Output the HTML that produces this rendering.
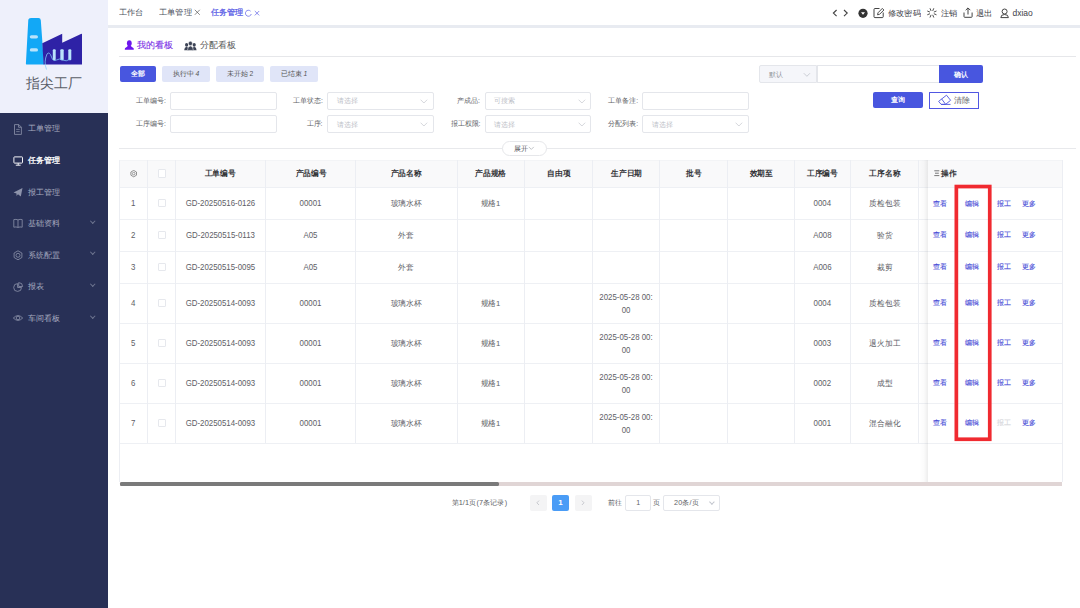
<!DOCTYPE html><html><head><meta charset="utf-8"><style>
*{box-sizing:border-box;margin:0;padding:0}
html,body{width:1080px;height:608px;overflow:hidden;background:#fff;font-family:"Liberation Sans",sans-serif;color:#606266}
.a{position:absolute;white-space:nowrap}
#side{position:absolute;left:0;top:0;width:107.6px;height:608px;background:#283056}
#logo{position:absolute;left:0;top:0;width:107.6px;height:112.5px;background:#eef0fb}
.mi{position:absolute;left:27.6px;font-size:7.6px;color:#a9adc0;line-height:10px;white-space:nowrap}
.mi.on{color:#fff;-webkit-text-stroke:0.3px #fff}
.chev{position:absolute;left:90.5px;width:3.5px;height:3.5px;border-right:0.8px solid #6f7590;border-bottom:0.8px solid #6f7590;transform:rotate(45deg)}
.btn{position:absolute;border-radius:2px;font-size:6.75px;text-align:center;white-space:nowrap}
.lbl{position:absolute;font-size:6.75px;color:#606266;line-height:10px;white-space:nowrap}
.inp{position:absolute;border:0.8px solid #e4e6eb;border-radius:2px;background:#fff}
.ph{position:absolute;font-size:6.75px;color:#bcc0c7;line-height:10px;white-space:nowrap}
.sc{position:absolute;width:3.8px;height:3.8px;border-right:0.6px solid #c0c4cc;border-bottom:0.6px solid #c0c4cc;transform:rotate(45deg)}
.hl{position:absolute;height:1px;background:#eef0f4}
.vl{position:absolute;width:1px;background:#eceef3}
.th{position:absolute;font-size:8px;font-weight:bold;color:#333438;line-height:10px;text-align:center;white-space:nowrap;transform:scaleX(0.96)}
.td{position:absolute;font-size:7.875px;color:#5e6066;line-height:12.6px;text-align:center}
.op{position:absolute;font-size:6.8px;color:#4a4ed6;line-height:10px;white-space:nowrap;-webkit-text-stroke:0.12px currentColor}
.cb{position:absolute;width:7.6px;height:8.2px;border:0.8px solid #e6e8ed;border-radius:1px;background:#fff}
</style></head><body>
<div id="side">
  <div id="logo">
    <svg width="107.5" height="112" style="position:absolute;left:0;top:0">
      <path d="M28.3 19.8 Q28.6 18 31 18 L38.5 18 Q40.6 18 40.8 20.2 L44 64.5 L26.5 64.5 Q25.8 64.5 25.9 63.5 Z" fill="#12a8f6"/>
      <path d="M42.3 43.3 L62.2 33.7 L62.2 42.7 L81.5 33.7 Q82 33.6 82 34.5 L82 64.5 L43.6 64.5 Z" fill="#2e22a6"/>
      <rect x="29.8" y="35.2" width="8.2" height="3.2" rx="1.6" fill="#b9e3fb"/>
      <rect x="29.8" y="48.3" width="8.2" height="3.2" rx="1.6" fill="#b9e3fb"/>
      <rect x="52.8" y="49.3" width="2.9" height="11" rx="1" fill="#b9e3fb"/>
      <rect x="60.3" y="49.3" width="3.4" height="11" rx="1" fill="#b9e3fb"/>
      <rect x="68.3" y="49.3" width="3" height="11" rx="1" fill="#b9e3fb"/>
      <path d="M46.5 69.5 Q43.5 62 47 54 Q49.5 51 51.5 57 Q53 62 56.5 60 Q59.5 58 62.5 60 Q66 62 70.5 59" stroke="#86cdf8" stroke-width="0.75" fill="none"/>
    </svg>
    <div class="a" style="left:25.5px;top:74.8px;font-size:14px;line-height:16px;color:#5a5e68">指尖工厂</div>
  </div>

<div class="mi" style="top:124.4px">工单管理</div>
<svg class="a" style="left:13px;top:123.8px" width="11" height="11"><path d="M1.5 0.6h4.3l2.6 2.6v7.2h-6.9z M5.6 0.6v2.7h2.8" fill="none" stroke="#8d93ab" stroke-width="0.8" stroke-linejoin="round"/><path d="M3.2 5.4h3.5 M3.2 7.6h3.5" stroke="#8d93ab" stroke-width="0.7"/></svg>
<div class="mi on" style="top:156.1px">任务管理</div>
<svg class="a" style="left:13px;top:155.5px" width="11" height="11"><rect x="0.9" y="0.9" width="8.6" height="6.2" rx="0.6" fill="none" stroke="#f4f4f8" stroke-width="1"/><path d="M2.8 9.2h4.8 M5.2 7.1v2" stroke="#f4f4f8" stroke-width="1"/></svg>
<div class="mi" style="top:187.7px">报工管理</div>
<svg class="a" style="left:13px;top:187.1px" width="11" height="11"><path d="M0.5 5.5 L9.5 1 L7.8 9.5 L5 7.3 L3.5 9 L3.5 6.5 Z" fill="#8d93ab"/></svg>
<div class="mi" style="top:218.9px">基础资料</div>
<svg class="a" style="left:13px;top:218.3px" width="11" height="11"><path d="M0.8 1.6 Q3 1 5 1.9 Q7 1 9.2 1.6 V9.2 Q7 8.6 5 9.4 Q3 8.6 0.8 9.2 Z M5 1.9 V9.4" fill="none" stroke="#8d93ab" stroke-width="0.8"/></svg>
<div class="chev" style="top:218.6px"></div>
<div class="mi" style="top:250.6px">系统配置</div>
<svg class="a" style="left:13px;top:250.0px" width="11" height="11"><circle cx="5" cy="5.3" r="2" fill="none" stroke="#8d93ab" stroke-width="0.8"/><path d="M5 0.8 L8.9 3 L8.9 7.5 L5 9.8 L1.1 7.5 L1.1 3 Z" fill="none" stroke="#8d93ab" stroke-width="0.8"/></svg>
<div class="chev" style="top:250.3px"></div>
<div class="mi" style="top:282.2px">报表</div>
<svg class="a" style="left:13px;top:281.6px" width="11" height="11"><path d="M4.6 1.6 A3.9 3.9 0 1 0 8.5 5.5 H4.6 Z M5.7 0.6 A3.9 3.9 0 0 1 9.6 4.5 H5.7 Z" fill="none" stroke="#8d93ab" stroke-width="0.8" stroke-linejoin="round"/></svg>
<div class="chev" style="top:281.9px"></div>
<div class="mi" style="top:313.9px">车间看板</div>
<svg class="a" style="left:13px;top:313.3px" width="11" height="11"><path d="M0.3 5 Q5 0.2 9.7 5 Q5 9.8 0.3 5z" fill="none" stroke="#8d93ab" stroke-width="0.8"/><circle cx="5" cy="5" r="1.8" fill="none" stroke="#8d93ab" stroke-width="0.8"/></svg>
<div class="chev" style="top:313.6px"></div>
</div>
<div class="a" style="left:107.5px;top:25px;width:972.5px;height:3px;background:#e8ebf1"></div>
<div class="a" style="left:119px;top:8px;font-size:7.875px;line-height:10px;color:#4a4f5c;transform:scaleX(1.03);transform-origin:0 0">工作台</div>
<div class="a" style="left:159.3px;top:8px;font-size:7.875px;line-height:10px;color:#4a4f5c;transform:scaleX(1.03);transform-origin:0 0">工单管理</div>
<svg class="a" style="left:194px;top:9px" width="7" height="7"><path d="M0.8 0.8 L5.8 5.8 M5.8 0.8 L0.8 5.8" stroke="#555" stroke-width="0.7"/></svg>
<div class="a" style="left:210.8px;top:8px;transform:scaleX(1.02);transform-origin:0 0;font-size:7.875px;line-height:10px;color:#5a5de6;-webkit-text-stroke:0.25px #5a5de6">任务管理</div>
<svg class="a" style="left:245px;top:9px" width="16" height="8"><path d="M5.6 2.2 A3 3 0 1 0 6.3 5" fill="none" stroke="#5a5de6" stroke-width="0.7"/><path d="M9.8 2 L14.2 6.4 M14.2 2 L9.8 6.4" stroke="#5a5de6" stroke-width="0.7"/></svg>
<svg class="a" style="left:830px;top:8px" width="212" height="12"><path d="M6.6 2 L3.4 5.1 L6.6 8.2 M14 2 L17.2 5.1 L14 8.2" fill="none" stroke="#444" stroke-width="1.15"/><circle cx="33" cy="5.3" r="4.6" fill="#333"/><path d="M31 4.3h4l-2 2.4z" fill="#fff"/></svg>
<svg class="a" style="left:873px;top:7px" width="12" height="12"><path d="M6.5 1.5 H2 Q1 1.5 1 2.5 V9.8 Q1 10.6 2 10.6 H9.3 Q10.2 10.6 10.2 9.8 V5.5" fill="none" stroke="#444" stroke-width="1"/><path d="M4.5 7.8 L5 5.8 L9.3 1.4 L10.9 3 L6.6 7.3 Z" fill="none" stroke="#444" stroke-width="0.95"/></svg>
<div class="a" style="left:887.5px;top:8.5px;font-size:7.875px;line-height:10px;color:#3e4148;transform:scaleX(1.03);transform-origin:0 0">修改密码</div>
<svg class="a" style="left:927px;top:8px" width="11" height="11"><path d="M7.21 5.86L9.15 6.66M5.86 7.21L6.66 9.15M3.94 7.21L3.14 9.15M2.59 5.86L0.65 6.66M2.59 3.94L0.65 3.14M3.94 2.59L3.14 0.65M5.86 2.59L6.66 0.65M7.21 3.94L9.15 3.14" stroke="#444" stroke-width="0.95" stroke-linecap="round"/></svg>
<div class="a" style="left:940.5px;top:8.5px;font-size:7.875px;line-height:10px;color:#3e4148;transform:scaleX(1.03);transform-origin:0 0">注销</div>
<svg class="a" style="left:963px;top:6.8px" width="11" height="11"><path d="M1 5.5 V9.6 Q1 10.3 1.7 10.3 H8.4 Q9.1 10.3 9.1 9.6 V5.5" fill="none" stroke="#444" stroke-width="1"/><path d="M5 7.5 V1 M2.7 3.2 L5 0.9 L7.3 3.2" fill="none" stroke="#444" stroke-width="1"/></svg>
<div class="a" style="left:976px;top:8.5px;font-size:7.875px;line-height:10px;color:#3e4148;transform:scaleX(1.03);transform-origin:0 0">退出</div>
<svg class="a" style="left:999.5px;top:7.8px" width="10" height="11"><circle cx="4.6" cy="3.5" r="2.5" fill="none" stroke="#444" stroke-width="1"/><path d="M0.8 9.6 Q0.8 6.5 4.6 6.5 Q8.4 6.5 8.4 9.6 Z" fill="none" stroke="#444" stroke-width="1"/></svg>
<div class="a" style="left:1012.5px;top:7.8px;font-size:8.5px;line-height:10px;color:#3e4148">dxiao</div>
<svg class="a" style="left:124px;top:40px" width="11" height="11"><ellipse cx="5.3" cy="3.2" rx="2.4" ry="2.9" fill="#6d16ee"/><path d="M3.9 5.6 Q3.6 7 1.2 8 Q0.8 8.3 0.8 9.7 H9.8 Q9.8 8.3 9.4 8 Q7 7 6.7 5.6 Z" fill="#6d16ee"/></svg>
<div class="a" style="left:136.5px;top:39.5px;font-size:9px;line-height:11px;color:#7a2de6;-webkit-text-stroke:0.1px #7a2de6">我的看板</div>
<svg class="a" style="left:183.5px;top:40.5px" width="14" height="10"><g fill="#3d4456"><ellipse cx="2.6" cy="3.8" rx="1.6" ry="1.9"/><path d="M0.2 9.2 Q0.3 6.2 2.6 5.8 Q4.6 6.2 4.8 9.2 Z"/><ellipse cx="10.2" cy="3.8" rx="1.6" ry="1.9"/><path d="M12.6 9.2 Q12.5 6.2 10.2 5.8 Q8.2 6.2 8 9.2 Z"/></g><g fill="#3d4456" stroke="#fff" stroke-width="0.5"><ellipse cx="6.4" cy="2.5" rx="2" ry="2.3"/><path d="M3.4 9.4 Q3.6 5.3 6.4 5 Q9.2 5.3 9.4 9.4 Z"/></g></svg>
<div class="a" style="left:199.6px;top:39.5px;font-size:9px;line-height:11px;color:#555">分配看板</div>
<div class="a" style="left:119px;top:56px;width:957px;height:1px;background:#e6e7ea"></div>
<div class="btn" style="left:119.7px;top:66.3px;width:36.3px;height:16.2px;background:#4856df;color:#fff;line-height:16.2px;font-weight:bold">全部</div>
<div class="btn" style="left:161.9px;top:66.3px;width:47.9px;height:16.2px;background:#e0e5f8;color:#555;line-height:16.2px">执行中 <i>4</i></div>
<div class="btn" style="left:216.1px;top:66.3px;width:47.8px;height:16.2px;background:#e0e5f8;color:#555;line-height:16.2px">未开始 2</div>
<div class="btn" style="left:270px;top:66.3px;width:48px;height:16.2px;background:#e0e5f8;color:#555;line-height:16.2px">已结束 <i>1</i></div>
<div class="inp" style="left:759.3px;top:65.4px;width:58px;height:17.8px;background:#f5f6fa;border-radius:2px 0 0 2px"></div>
<div class="ph" style="left:769px;top:69.5px;color:#909399">默认</div>
<svg class="a" style="left:802.5px;top:72px" width="8" height="6"><path d="M0.8 1.2 L3.9 4.3 L7 1.2" fill="none" stroke="#b8bcc4" stroke-width="0.7"/></svg>
<div class="inp" style="left:816.5px;top:65.4px;width:123px;height:17.8px;border-radius:0"></div>
<div class="btn" style="left:939px;top:65.4px;width:44.4px;height:18px;background:#4856df;color:#fff;line-height:18px;border-radius:0 2px 2px 0;font-weight:bold" ><span style="position:relative;top:0.6px">确认</span></div>
<div class="lbl" style="left:136px;top:95.6px;width:28.5px;text-align:right">工单编号:</div>
<div class="inp" style="left:170px;top:91.7px;width:106.5px;height:18px"></div>
<div class="lbl" style="left:292.9px;top:95.6px;width:28.9px;text-align:right">工单状态:</div>
<div class="inp" style="left:327.3px;top:91.7px;width:106.5px;height:18px"></div>
<div class="ph" style="left:336.9px;top:95.8px">请选择</div>
<svg class="a" style="left:420.3px;top:98.5px" width="8" height="5"><path d="M0.6 0.7 L3.9 4 L7.2 0.7" fill="none" stroke="#c3c6cd" stroke-width="0.7"/></svg>
<div class="lbl" style="left:456.9px;top:95.6px;width:22.4px;text-align:right">产成品:</div>
<div class="inp" style="left:484.8px;top:91.7px;width:106.5px;height:18px"></div>
<div class="ph" style="left:494.4px;top:95.8px">可搜索</div>
<svg class="a" style="left:577.8px;top:98.5px" width="8" height="5"><path d="M0.6 0.7 L3.9 4 L7.2 0.7" fill="none" stroke="#c3c6cd" stroke-width="0.7"/></svg>
<div class="lbl" style="left:608.3px;top:95.6px;width:28.5px;text-align:right">工单备注:</div>
<div class="inp" style="left:642.3px;top:91.7px;width:106.5px;height:18px"></div>
<div class="lbl" style="left:136px;top:119.3px;width:28.5px;text-align:right">工序编号:</div>
<div class="inp" style="left:170px;top:115.4px;width:106.5px;height:18px"></div>
<div class="lbl" style="left:306.6px;top:119.3px;width:15.2px;text-align:right">工序:</div>
<div class="inp" style="left:327.3px;top:115.4px;width:106.5px;height:18px"></div>
<div class="ph" style="left:336.9px;top:119.5px">请选择</div>
<svg class="a" style="left:420.3px;top:122.2px" width="8" height="5"><path d="M0.6 0.7 L3.9 4 L7.2 0.7" fill="none" stroke="#c3c6cd" stroke-width="0.7"/></svg>
<div class="lbl" style="left:450.5px;top:119.3px;width:28.8px;text-align:right">报工权限:</div>
<div class="inp" style="left:484.8px;top:115.4px;width:106.5px;height:18px"></div>
<div class="ph" style="left:494.4px;top:119.5px">请选择</div>
<svg class="a" style="left:577.8px;top:122.2px" width="8" height="5"><path d="M0.6 0.7 L3.9 4 L7.2 0.7" fill="none" stroke="#c3c6cd" stroke-width="0.7"/></svg>
<div class="lbl" style="left:608.3px;top:119.3px;width:28.5px;text-align:right">分配列表:</div>
<div class="inp" style="left:642.3px;top:115.4px;width:106.5px;height:18px"></div>
<div class="ph" style="left:651.9px;top:119.5px">请选择</div>
<svg class="a" style="left:735.3px;top:122.2px" width="8" height="5"><path d="M0.6 0.7 L3.9 4 L7.2 0.7" fill="none" stroke="#c3c6cd" stroke-width="0.7"/></svg>
<div class="btn" style="left:872.5px;top:91.9px;width:50.4px;height:16.4px;background:#4856df;color:#fff;line-height:16.4px;font-weight:bold">查询</div>
<div class="btn" style="left:928.7px;top:92px;width:50.3px;height:16.7px;border:1.1px solid #5157e2;border-bottom-width:1.4px;border-radius:0.5px;background:#fff"></div>
<svg class="a" style="left:936px;top:93px" width="16" height="13"><path d="M2.6 8.4 L10.5 2.2 L14.6 7.3 L9.6 11.4 L5.2 11.4 Z M5.6 5.9 L9.4 11" fill="none" stroke="#4d55e0" stroke-width="0.9" stroke-linejoin="round"/><path d="M5 11.4 H14.5" stroke="#4d55e0" stroke-width="0.9"/></svg>
<div class="a" style="left:954px;top:95.5px;font-size:7.875px;line-height:10px;color:#606266">清除</div>
<div class="a" style="left:119px;top:148px;width:957px;height:1px;background:#e8e9ec"></div>
<div class="a" style="left:501.7px;top:141.2px;width:45px;height:14.5px;border:0.9px solid #e6e7ea;border-radius:7.5px;background:#fff"></div>
<div class="a" style="left:513.6px;top:143.5px;font-size:7px;line-height:10px;color:#505258">展开</div>
<svg class="a" style="left:528px;top:146px" width="7" height="5"><path d="M0.8 0.9 L3.3 3.4 L5.8 0.9" fill="none" stroke="#a8abb2" stroke-width="0.7"/></svg>
<div class="a" style="left:119.3px;top:160px;width:943px;height:27.599999999999994px;background:#f9f9fa"></div>
<div class="hl" style="left:119.3px;top:160px;width:943px;background:#f3f4f6"></div>
<div class="hl" style="left:119.3px;top:187.1px;width:943px"></div>
<div class="hl" style="left:119.3px;top:218.9px;width:943px"></div>
<div class="hl" style="left:119.3px;top:250.7px;width:943px"></div>
<div class="hl" style="left:119.3px;top:282.8px;width:943px"></div>
<div class="hl" style="left:119.3px;top:322.8px;width:943px"></div>
<div class="hl" style="left:119.3px;top:362.8px;width:943px"></div>
<div class="hl" style="left:119.3px;top:402.8px;width:943px"></div>
<div class="hl" style="left:119.3px;top:442.9px;width:943px"></div>
<div class="vl" style="left:118.8px;top:160px;height:283.4px"></div>
<div class="vl" style="left:146.7px;top:160px;height:283.4px"></div>
<div class="vl" style="left:174.9px;top:160px;height:283.4px"></div>
<div class="vl" style="left:265.0px;top:160px;height:283.4px"></div>
<div class="vl" style="left:354.9px;top:160px;height:283.4px"></div>
<div class="vl" style="left:456.9px;top:160px;height:283.4px"></div>
<div class="vl" style="left:524.0px;top:160px;height:283.4px"></div>
<div class="vl" style="left:592.0px;top:160px;height:283.4px"></div>
<div class="vl" style="left:659.0px;top:160px;height:283.4px"></div>
<div class="vl" style="left:727.1px;top:160px;height:283.4px"></div>
<div class="vl" style="left:793.5px;top:160px;height:283.4px"></div>
<div class="vl" style="left:850.2px;top:160px;height:283.4px"></div>
<div class="vl" style="left:917.9px;top:160px;height:283.4px"></div>
<div class="vl" style="left:1061.9px;top:160px;height:283.4px"></div>
<div class="vl" style="left:118.8px;top:443px;height:38.5px"></div>
<div class="vl" style="left:1061.9px;top:443px;height:38.5px"></div>
<div class="th" style="left:175.4px;width:90.1px;top:168.5px">工单编号</div>
<div class="th" style="left:265.5px;width:89.9px;top:168.5px">产品编号</div>
<div class="th" style="left:355.4px;width:102.0px;top:168.5px">产品名称</div>
<div class="th" style="left:457.4px;width:67.1px;top:168.5px">产品规格</div>
<div class="th" style="left:524.5px;width:68.0px;top:168.5px">自由项</div>
<div class="th" style="left:592.5px;width:67.0px;top:168.5px">生产日期</div>
<div class="th" style="left:659.5px;width:68.1px;top:168.5px">批号</div>
<div class="th" style="left:727.6px;width:66.4px;top:168.5px">效期至</div>
<div class="th" style="left:794px;width:56.7px;top:168.5px">工序编号</div>
<div class="th" style="left:850.7px;width:67.7px;top:168.5px">工序名称</div>
<svg class="a" style="left:130px;top:169.8px" width="8" height="8"><circle cx="3.7" cy="3.6" r="1.3" fill="none" stroke="#777" stroke-width="0.7"/><path d="M3.7 0.4 L6.5 2 L6.5 5.2 L3.7 6.8 L0.9 5.2 L0.9 2Z" fill="none" stroke="#777" stroke-width="0.8"/></svg>
<div class="cb" style="left:158.2px;top:169.4px"></div>
<div class="td" style="left:119.3px;width:27.9px;top:198.12px;line-height:10.77px;transform:translateY(0.6px) scaleY(1.17);">1</div>
<div class="td" style="left:175.4px;width:90.1px;top:198.12px;line-height:10.77px;transform:translateY(0.6px) scaleY(1.17);">GD-20250516-0126</div>
<div class="td" style="left:265.5px;width:89.9px;top:198.12px;line-height:10.77px;transform:translateY(0.6px) scaleY(1.17);">00001</div>
<div class="td" style="left:355.4px;width:102.0px;top:197.20px;line-height:12.60px;transform:translateY(0.9px) scaleX(0.96);font-size:8px;">玻璃水杯</div>
<div class="td" style="left:457.4px;width:67.1px;top:197.20px;line-height:12.60px;transform:translateY(0.9px) scaleX(0.96);font-size:8px;">规格<span style="display:inline-block">1</span></div>
<div class="td" style="left:794px;width:56.7px;top:198.12px;line-height:10.77px;transform:translateY(0.6px) scaleY(1.17);">0004</div>
<div class="td" style="left:850.7px;width:67.7px;top:197.20px;line-height:12.60px;transform:translateY(0.9px) scaleX(0.96);font-size:8px;">质检包装</div>
<div class="cb" style="left:158.2px;top:199.0px"></div>
<div class="op" style="left:933.3px;top:198.5px;color:#4b50d8">查看</div>
<div class="op" style="left:965px;top:198.5px;color:#4b50d8">编辑</div>
<div class="op" style="left:996.7px;top:198.5px;color:#4b50d8">报工</div>
<div class="op" style="left:1021.7px;top:198.5px;color:#4b50d8">更多</div>
<div class="td" style="left:119.3px;width:27.9px;top:229.92px;line-height:10.77px;transform:translateY(0.6px) scaleY(1.17);">2</div>
<div class="td" style="left:175.4px;width:90.1px;top:229.92px;line-height:10.77px;transform:translateY(0.6px) scaleY(1.17);">GD-20250515-0113</div>
<div class="td" style="left:265.5px;width:89.9px;top:229.92px;line-height:10.77px;transform:translateY(0.6px) scaleY(1.17);">A05</div>
<div class="td" style="left:355.4px;width:102.0px;top:229.00px;line-height:12.60px;transform:translateY(0.9px) scaleX(0.96);font-size:8px;">外套</div>
<div class="td" style="left:794px;width:56.7px;top:229.92px;line-height:10.77px;transform:translateY(0.6px) scaleY(1.17);">A008</div>
<div class="td" style="left:850.7px;width:67.7px;top:229.00px;line-height:12.60px;transform:translateY(0.9px) scaleX(0.96);font-size:8px;">验货</div>
<div class="cb" style="left:158.2px;top:230.8px"></div>
<div class="op" style="left:933.3px;top:230.3px;color:#4b50d8">查看</div>
<div class="op" style="left:965px;top:230.3px;color:#4b50d8">编辑</div>
<div class="op" style="left:996.7px;top:230.3px;color:#4b50d8">报工</div>
<div class="op" style="left:1021.7px;top:230.3px;color:#4b50d8">更多</div>
<div class="td" style="left:119.3px;width:27.9px;top:261.87px;line-height:10.77px;transform:translateY(0.6px) scaleY(1.17);">3</div>
<div class="td" style="left:175.4px;width:90.1px;top:261.87px;line-height:10.77px;transform:translateY(0.6px) scaleY(1.17);">GD-20250515-0095</div>
<div class="td" style="left:265.5px;width:89.9px;top:261.87px;line-height:10.77px;transform:translateY(0.6px) scaleY(1.17);">A05</div>
<div class="td" style="left:355.4px;width:102.0px;top:260.95px;line-height:12.60px;transform:translateY(0.9px) scaleX(0.96);font-size:8px;">外套</div>
<div class="td" style="left:794px;width:56.7px;top:261.87px;line-height:10.77px;transform:translateY(0.6px) scaleY(1.17);">A006</div>
<div class="td" style="left:850.7px;width:67.7px;top:260.95px;line-height:12.60px;transform:translateY(0.9px) scaleX(0.96);font-size:8px;">裁剪</div>
<div class="cb" style="left:158.2px;top:262.8px"></div>
<div class="op" style="left:933.3px;top:262.2px;color:#4b50d8">查看</div>
<div class="op" style="left:965px;top:262.2px;color:#4b50d8">编辑</div>
<div class="op" style="left:996.7px;top:262.2px;color:#4b50d8">报工</div>
<div class="op" style="left:1021.7px;top:262.2px;color:#4b50d8">更多</div>
<div class="td" style="left:119.3px;width:27.9px;top:297.92px;line-height:10.77px;transform:translateY(0.6px) scaleY(1.17);">4</div>
<div class="td" style="left:175.4px;width:90.1px;top:297.92px;line-height:10.77px;transform:translateY(0.6px) scaleY(1.17);">GD-20250514-0093</div>
<div class="td" style="left:265.5px;width:89.9px;top:297.92px;line-height:10.77px;transform:translateY(0.6px) scaleY(1.17);">00001</div>
<div class="td" style="left:355.4px;width:102.0px;top:297.00px;line-height:12.60px;transform:translateY(0.9px) scaleX(0.96);font-size:8px;">玻璃水杯</div>
<div class="td" style="left:457.4px;width:67.1px;top:297.00px;line-height:12.60px;transform:translateY(0.9px) scaleX(0.96);font-size:8px;">规格<span style="display:inline-block">1</span></div>
<div class="td" style="left:592.5px;width:67.0px;top:292.53px;line-height:10.77px;transform:translateY(0.6px) scaleY(1.17);">2025-05-28 00:<br>00</div>
<div class="td" style="left:794px;width:56.7px;top:297.92px;line-height:10.77px;transform:translateY(0.6px) scaleY(1.17);">0004</div>
<div class="td" style="left:850.7px;width:67.7px;top:297.00px;line-height:12.60px;transform:translateY(0.9px) scaleX(0.96);font-size:8px;">质检包装</div>
<div class="cb" style="left:158.2px;top:298.8px"></div>
<div class="op" style="left:933.3px;top:298.3px;color:#4b50d8">查看</div>
<div class="op" style="left:965px;top:298.3px;color:#4b50d8">编辑</div>
<div class="op" style="left:996.7px;top:298.3px;color:#4b50d8">报工</div>
<div class="op" style="left:1021.7px;top:298.3px;color:#4b50d8">更多</div>
<div class="td" style="left:119.3px;width:27.9px;top:337.92px;line-height:10.77px;transform:translateY(0.6px) scaleY(1.17);">5</div>
<div class="td" style="left:175.4px;width:90.1px;top:337.92px;line-height:10.77px;transform:translateY(0.6px) scaleY(1.17);">GD-20250514-0093</div>
<div class="td" style="left:265.5px;width:89.9px;top:337.92px;line-height:10.77px;transform:translateY(0.6px) scaleY(1.17);">00001</div>
<div class="td" style="left:355.4px;width:102.0px;top:337.00px;line-height:12.60px;transform:translateY(0.9px) scaleX(0.96);font-size:8px;">玻璃水杯</div>
<div class="td" style="left:457.4px;width:67.1px;top:337.00px;line-height:12.60px;transform:translateY(0.9px) scaleX(0.96);font-size:8px;">规格<span style="display:inline-block">1</span></div>
<div class="td" style="left:592.5px;width:67.0px;top:332.53px;line-height:10.77px;transform:translateY(0.6px) scaleY(1.17);">2025-05-28 00:<br>00</div>
<div class="td" style="left:794px;width:56.7px;top:337.92px;line-height:10.77px;transform:translateY(0.6px) scaleY(1.17);">0003</div>
<div class="td" style="left:850.7px;width:67.7px;top:337.00px;line-height:12.60px;transform:translateY(0.9px) scaleX(0.96);font-size:8px;">退火加工</div>
<div class="cb" style="left:158.2px;top:338.8px"></div>
<div class="op" style="left:933.3px;top:338.3px;color:#4b50d8">查看</div>
<div class="op" style="left:965px;top:338.3px;color:#4b50d8">编辑</div>
<div class="op" style="left:996.7px;top:338.3px;color:#4b50d8">报工</div>
<div class="op" style="left:1021.7px;top:338.3px;color:#4b50d8">更多</div>
<div class="td" style="left:119.3px;width:27.9px;top:377.92px;line-height:10.77px;transform:translateY(0.6px) scaleY(1.17);">6</div>
<div class="td" style="left:175.4px;width:90.1px;top:377.92px;line-height:10.77px;transform:translateY(0.6px) scaleY(1.17);">GD-20250514-0093</div>
<div class="td" style="left:265.5px;width:89.9px;top:377.92px;line-height:10.77px;transform:translateY(0.6px) scaleY(1.17);">00001</div>
<div class="td" style="left:355.4px;width:102.0px;top:377.00px;line-height:12.60px;transform:translateY(0.9px) scaleX(0.96);font-size:8px;">玻璃水杯</div>
<div class="td" style="left:457.4px;width:67.1px;top:377.00px;line-height:12.60px;transform:translateY(0.9px) scaleX(0.96);font-size:8px;">规格<span style="display:inline-block">1</span></div>
<div class="td" style="left:592.5px;width:67.0px;top:372.53px;line-height:10.77px;transform:translateY(0.6px) scaleY(1.17);">2025-05-28 00:<br>00</div>
<div class="td" style="left:794px;width:56.7px;top:377.92px;line-height:10.77px;transform:translateY(0.6px) scaleY(1.17);">0002</div>
<div class="td" style="left:850.7px;width:67.7px;top:377.00px;line-height:12.60px;transform:translateY(0.9px) scaleX(0.96);font-size:8px;">成型</div>
<div class="cb" style="left:158.2px;top:378.8px"></div>
<div class="op" style="left:933.3px;top:378.3px;color:#4b50d8">查看</div>
<div class="op" style="left:965px;top:378.3px;color:#4b50d8">编辑</div>
<div class="op" style="left:996.7px;top:378.3px;color:#4b50d8">报工</div>
<div class="op" style="left:1021.7px;top:378.3px;color:#4b50d8">更多</div>
<div class="td" style="left:119.3px;width:27.9px;top:417.97px;line-height:10.77px;transform:translateY(0.6px) scaleY(1.17);">7</div>
<div class="td" style="left:175.4px;width:90.1px;top:417.97px;line-height:10.77px;transform:translateY(0.6px) scaleY(1.17);">GD-20250514-0093</div>
<div class="td" style="left:265.5px;width:89.9px;top:417.97px;line-height:10.77px;transform:translateY(0.6px) scaleY(1.17);">00001</div>
<div class="td" style="left:355.4px;width:102.0px;top:417.05px;line-height:12.60px;transform:translateY(0.9px) scaleX(0.96);font-size:8px;">玻璃水杯</div>
<div class="td" style="left:457.4px;width:67.1px;top:417.05px;line-height:12.60px;transform:translateY(0.9px) scaleX(0.96);font-size:8px;">规格<span style="display:inline-block">1</span></div>
<div class="td" style="left:592.5px;width:67.0px;top:412.58px;line-height:10.77px;transform:translateY(0.6px) scaleY(1.17);">2025-05-28 00:<br>00</div>
<div class="td" style="left:794px;width:56.7px;top:417.97px;line-height:10.77px;transform:translateY(0.6px) scaleY(1.17);">0001</div>
<div class="td" style="left:850.7px;width:67.7px;top:417.05px;line-height:12.60px;transform:translateY(0.9px) scaleX(0.96);font-size:8px;">混合融化</div>
<div class="cb" style="left:158.2px;top:418.9px"></div>
<div class="op" style="left:933.3px;top:418.4px;color:#4b50d8">查看</div>
<div class="op" style="left:965px;top:418.4px;color:#4b50d8">编辑</div>
<div class="op" style="left:996.7px;top:418.4px;color:#d6d7db">报工</div>
<div class="op" style="left:1021.7px;top:418.4px;color:#4b50d8">更多</div>
<div class="a" style="left:919px;top:160px;width:8.6px;height:321.5px;background:linear-gradient(90deg,rgba(0,0,0,0) 0%,rgba(0,0,0,0.015) 55%,rgba(0,0,0,0.07) 100%)"></div>
<div class="th" style="left:940.6px;top:168.5px;text-align:left;transform-origin:0 0">操作</div>
<svg class="a" style="left:933.5px;top:170.3px" width="6" height="7"><path d="M0.3 0.8h5 M1 3.2h3.8 M0.3 5.6h5" stroke="#555" stroke-width="0.8"/></svg>
<div class="a" style="left:119.8px;top:482.4px;width:942.5px;height:3.4px;background:#e0d5d5"></div>
<div class="a" style="left:119.8px;top:482.4px;width:379.5px;height:3.4px;background:#7a7a7a;border-radius:1.5px"></div>
<svg class="a" style="left:950px;top:180px" width="46" height="266"><rect x="6.35" y="6.55" width="33.4" height="252.7" fill="none" stroke="#f02a30" stroke-width="3.7"/></svg>
<div class="a" style="left:451.5px;top:497.8px;font-size:7.3px;letter-spacing:0.15px;line-height:10px;color:#606266">第1/1页(7条记录)</div>
<div class="btn" style="left:530px;top:495.1px;width:16.7px;height:15.9px;background:#f4f4f5"></div>
<svg class="a" style="left:535.6px;top:500.2px" width="4" height="6"><path d="M3 0.6 L0.9 2.8 L3 5" fill="none" stroke="#b8bbc2" stroke-width="0.75"/></svg>
<div class="btn" style="left:552.3px;top:495.1px;width:16.6px;height:15.9px;background:#4a9cf6;color:#fff;font-weight:bold;font-size:8px;line-height:15.9px">1</div>
<div class="btn" style="left:574.8px;top:495.1px;width:17px;height:15.9px;background:#f4f4f5"></div>
<svg class="a" style="left:580.8px;top:500.2px" width="4" height="6"><path d="M0.9 0.6 L3 2.8 L0.9 5" fill="none" stroke="#b8bbc2" stroke-width="0.75"/></svg>
<div class="a" style="left:608px;top:497.8px;font-size:6.75px;line-height:10px;color:#606266">前往</div>
<div class="inp" style="left:625.2px;top:495.1px;width:26.2px;height:15.7px;font-size:7px;line-height:14px;text-align:center;color:#606266">1</div>
<div class="a" style="left:653px;top:497.8px;font-size:6.75px;line-height:10px;color:#606266">页</div>
<div class="inp" style="left:663.3px;top:495.1px;width:57px;height:15.7px"></div>
<div class="a" style="left:674px;top:497.8px;font-size:7.2px;letter-spacing:0.2px;line-height:10px;color:#606266">20条/页</div>
<div class="sc" style="left:710.3px;top:499.6px"></div>
</body></html>
